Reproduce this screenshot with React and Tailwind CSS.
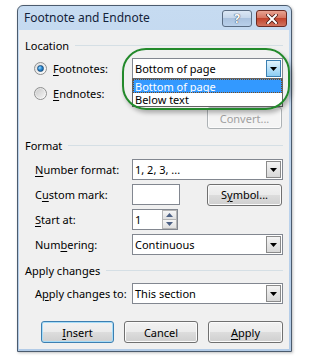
import React from 'react';

const font = { fontFamily: '"Noto Sans", "Open Sans", sans-serif' };

const U = ({ children }) => <span className="underline underline-offset-2">{children}</span>;

const Arrow = ({ color = '#000' }) => (
    <svg width="7" height="4" viewBox="0 0 7 4">
        <path d="M0 0H7L3.5 4Z" fill={color} />
    </svg>
);

const Combo = ({ value, active = false, children }) => (
    <div className="relative flex-1 h-[21px] bg-white border border-[#828790] flex items-center">
        <span className="pl-[2px] flex-1 text-[11px] leading-none text-black whitespace-nowrap">{value}</span>
        <div
            className={
                active
                    ? 'w-[15px] h-[17px] mr-[1px] flex items-center justify-center border border-[#3c7fb1] bg-gradient-to-b from-[#e3f4fc] to-[#8ccdf4]'
                    : 'w-[15px] h-[17px] mr-[1px] flex items-center justify-center border border-[#8a8a8a] bg-gradient-to-b from-[#f4f4f4] to-[#d8d8d8]'
            }
        >
            <Arrow />
        </div>
        {children}
    </div>
);

const Button = ({ children, width, disabled = false, primary = false }) => (
    <div
        className={
            'h-[22px] rounded-[3px] flex items-center justify-center text-[11px] leading-none whitespace-nowrap ' +
            (primary
                ? 'border border-[#3c7fb1] shadow-[inset_0_0_0_1px_#a6dcf8] '
                : 'border border-[#707070] shadow-[inset_0_0_0_1px_#fbfbfb] ') +
            (disabled ? 'text-[#a0a0a0] border-[#adb2b5] bg-[#f4f4f4]' : 'text-black bg-[linear-gradient(#f2f2f2_0%,#ebebeb_50%,#dddddd_50%,#cfcfcf_100%)]')
        }
        style={{ width }}
    >
        {children}
    </div>
);

const Radio = ({ checked }) => (
    <div className="w-[13px] h-[13px] rounded-full border border-[#8e8f8f] bg-gradient-to-br from-[#dcdcdc] to-[#ffffff] flex items-center justify-center">
        <div
            className={
                checked
                    ? 'w-[7px] h-[7px] rounded-full bg-[radial-gradient(circle_at_35%_35%,#9fdcff_0%,#2a8ad4_45%,#0d4f8d_100%)] border border-[#1c5180]'
                    : 'w-[9px] h-[9px] rounded-full bg-gradient-to-br from-[#cbcbcb] to-[#f4f4f4]'
            }
        />
    </div>
);

const Group = ({ title, mt }) => (
    <div className={'flex items-center h-[14px] ' + mt}>
        <span className="text-[11px] leading-none text-black whitespace-nowrap">{title}</span>
        <div className="flex-1 h-px bg-[#d5dfe5] ml-[6px]" />
    </div>
);

const Row = ({ label, mt = 'mt-[4px]', children }) => (
    <div className={'flex items-center h-[21px] ' + mt}>
        <div className="w-[107px] shrink-0 pl-[10px] text-[11px] leading-none text-black whitespace-nowrap">{label}</div>
        {children}
    </div>
);

export default function App() {
    return (
        <div className="relative w-[312px] h-[363px] bg-white pt-[5px] pl-[17px]" style={font}>
            {/* Window */}
            <div className="w-[275px] h-[347px] border border-[#4b5b6e] rounded-t-[6px] flex flex-col bg-gradient-to-b from-[#c6dbf1] to-[#b2cbe7] shadow-[1px_1px_3px_rgba(0,0,0,0.25)]">
                {/* Title bar */}
                <div className="h-[24px] flex items-center justify-between pl-[6px] pr-[4px]">
                    <span className="text-[12px] leading-none text-[#14233a] whitespace-nowrap">Footnote and Endnote</span>
                    <div className="flex items-center gap-[4px] self-start mt-[4px]">
                        <div className="w-[30px] h-[17px] rounded-[3px] border border-[#5a6c82] bg-[linear-gradient(#dbe7f4_0%,#c4d6ea_50%,#aac2de_50%,#b9d0ea_100%)] flex items-center justify-center">
                            <span className="text-[12px] font-bold leading-none text-white [text-shadow:0_0_1px_#2b3d55,0_0_1px_#2b3d55]">?</span>
                        </div>
                        <div className="w-[31px] h-[17px] rounded-[3px] border border-[#6b2a22] bg-[linear-gradient(#e8a493_0%,#d4705c_50%,#c2432c_50%,#d07460_100%)] flex items-center justify-center">
                            <svg width="12" height="10" viewBox="0 0 12 10">
                                <path d="M2 1L10 9M10 1L2 9" stroke="#4a1a14" strokeWidth="3.6" strokeLinecap="square" />
                                <path d="M2 1L10 9M10 1L2 9" stroke="#ffffff" strokeWidth="2" strokeLinecap="square" />
                            </svg>
                        </div>
                    </div>
                </div>

                {/* Client area */}
                <div className="flex-1 ml-px mr-[2px] mb-[2px] bg-[#f0f0f0] px-[6px] flex flex-col">
                    <Group title="Location" mt="mt-[8px]" />

                    <div className="flex items-center h-[21px] mt-[6px]">
                        <div className="w-[107px] shrink-0 pl-[9px] flex items-center gap-[6px]">
                            <Radio checked />
                            <span className="text-[11px] leading-none text-black"><U>F</U>ootnotes:</span>
                        </div>
                        <Combo value="Bottom of page" active>
                            <div className="absolute left-[-1px] right-[-1px] top-full bg-white border border-[#646464] z-10 text-[11px] leading-none">
                                <div className="h-[14px] bg-[#3399ff] text-white flex items-center pl-[2px] outline outline-1 outline-dotted outline-[#7a4a1a] -outline-offset-1">Bottom of page</div>
                                <div className="h-[13px] text-black flex items-center pl-[2px]">Below text</div>
                            </div>
                        </Combo>
                    </div>

                    <div className="flex items-center h-[21px] mt-[4px]">
                        <div className="w-[107px] shrink-0 pl-[9px] flex items-center gap-[6px]">
                            <Radio />
                            <span className="text-[11px] leading-none text-black"><U>E</U>ndnotes:</span>
                        </div>
                    </div>

                    <div className="flex justify-end mt-[3px] pr-px">
                        <Button width="75px" disabled>Convert...</Button>
                    </div>

                    <Group title="Format" mt="mt-[9px]" />

                    <Row label={<><U>N</U>umber format:</>} mt="mt-[7px]">
                        <Combo value="1, 2, 3, ..." />
                    </Row>

                    <Row label={<>C<U>u</U>stom mark:</>}>
                        <div className="w-[48px] h-[21px] bg-white border border-[#828790]" />
                        <div className="flex-1 flex justify-end pr-px">
                            <Button width="75px">S<U>y</U>mbol...</Button>
                        </div>
                    </Row>

                    <Row label={<><U>S</U>tart at:</>}>
                        <div className="w-[46px] h-[21px] bg-white border border-[#828790] flex items-center">
                            <span className="flex-1 pl-[2px] text-[11px] leading-none text-black">1</span>
                            <div className="w-[15px] h-[19px] flex flex-col">
                                <div className="flex-1 border border-[#b5b5b5] bg-gradient-to-b from-[#f6f6f6] to-[#e0e0e0] flex items-center justify-center">
                                    <svg width="7" height="4" viewBox="0 0 7 4"><path d="M0 4H7L3.5 0Z" fill="#4d6185" /></svg>
                                </div>
                                <div className="flex-1 border border-t-0 border-[#b5b5b5] bg-gradient-to-b from-[#f6f6f6] to-[#e0e0e0] flex items-center justify-center">
                                    <Arrow color="#4d6185" />
                                </div>
                            </div>
                        </div>
                    </Row>

                    <Row label={<>Num<U>b</U>ering:</>}>
                        <Combo value="Continuous" />
                    </Row>

                    <Group title="Apply changes" mt="mt-[8px]" />

                    <Row label={<>A<U>p</U>ply changes to:</>} mt="mt-[6px]">
                        <Combo value="This section" />
                    </Row>

                    <div className="flex items-center gap-[10px] mt-[17px] pl-[16px]">
                        <Button width="73px" primary><U>I</U>nsert</Button>
                        <Button width="74px">Cancel</Button>
                        <Button width="75px"><U>A</U>pply</Button>
                    </div>
                </div>
            </div>

            {/* Green annotation ring */}
            <div className="absolute left-[122px] top-[48px] w-[168px] h-[62px] rounded-[24px] border-2 border-[#23892b] shadow-[2px_3px_4px_rgba(0,0,0,0.28)] pointer-events-none z-20" />
        </div>
    );
}
